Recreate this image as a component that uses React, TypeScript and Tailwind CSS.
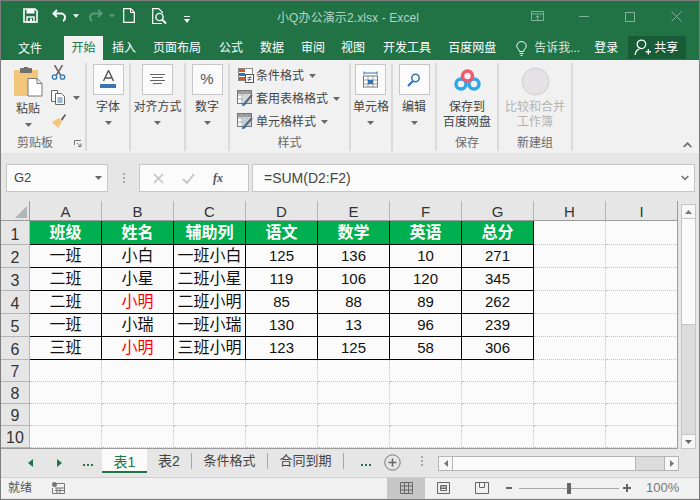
import type { ReactNode } from "react";

const FONT = { fontFamily: '"Liberation Sans", "Noto Sans CJK SC", sans-serif' };

const COLS = ["A", "B", "C", "D", "E", "F", "G", "H", "I"];
const HEAD = ["班级", "姓名", "辅助列", "语文", "数学", "英语", "总分"];
const ROWS = [
  ["一班", "小白", "一班小白", "125", "136", "10", "271"],
  ["二班", "小星", "二班小星", "119", "106", "120", "345"],
  ["二班", "小明", "二班小明", "85", "88", "89", "262"],
  ["一班", "小瑞", "一班小瑞", "130", "13", "96", "239"],
  ["三班", "小明", "三班小明", "123", "125", "58", "306"],
];
const RED = new Set([2, 4]);

function Caret({ className = "" }: { className?: string }) {
  return (
    <svg width="7" height="4" viewBox="0 0 7 4" className={className}>
      <path d="M0 0h7L3.5 4z" fill="#6a6a6a" />
    </svg>
  );
}

function Group({
  width,
  title,
  children,
}: {
  width: string;
  title: ReactNode;
  children: ReactNode;
}) {
  return (
    <div className={`${width} flex h-[88px] flex-col border-r-2 border-[#dadada]`}>
      <div className="h-[72px]">{children}</div>
      <div className="flex h-[16px] items-center justify-center text-xs text-[#6a6a6a]">
        {title}
      </div>
    </div>
  );
}

function BigButton({ label, children }: { label: string; children: ReactNode }) {
  return (
    <div className="flex flex-col items-center pt-[1px]">
      <div className="flex h-[31px] w-[31px] items-center justify-center border border-[#c6c6c6] bg-[#fbfbfb]">
        {children}
      </div>
      <div className="mt-[3px] whitespace-nowrap text-xs leading-[18px] text-[#444]">{label}</div>
      <Caret className="mt-[5px]" />
    </div>
  );
}

function StyleRow({ label, icon }: { label: string; icon: ReactNode }) {
  return (
    <div className="flex h-[23px] items-center">
      <div className="flex w-[17px] justify-center">{icon}</div>
      <span className="ml-[2px] whitespace-nowrap text-xs text-[#444]">{label}</span>
      <Caret className="ml-[5px]" />
    </div>
  );
}

function TableIcon({ tint }: { tint: string }) {
  return (
    <svg width="17" height="17" viewBox="0 0 17 17">
      <rect x="0.5" y="0.5" width="14" height="13" fill="#fff" stroke="#777" />
      <rect x="1" y="1" width="13" height="3" fill="#9a9a9a" />
      <path d="M5 1v12M10 1v12M1 5h13M1 9h13" stroke="#a9a9a9" />
      <rect x="6" y="5" width="8" height="8" fill={tint} />
      <path d="M15 5l-7 8" stroke="#666" strokeWidth="2" />
      <path d="M5 16c0-3 2-4 4-4 1 2-1 4-4 4z" fill="#2f75b5" />
    </svg>
  );
}

function Cell({ children, className }: { children?: ReactNode; className: string }) {
  return <div className={`flex items-center justify-center ${className}`}>{children}</div>;
}

export default function App() {
  return (
    <div
      className="flex h-[500px] w-[700px] flex-col overflow-hidden border border-[#7d7d7d] bg-[#e6e6e6]"
      style={FONT}
    >
      {/* title bar */}
      <div className="h-[35px] bg-[#217346] flex items-center text-white">
        <svg width="15" height="15" viewBox="0 0 15 15" className="ml-[22px] mb-[6px]">
          <path d="M1 1h11l2 2v11H1z" fill="none" stroke="#fff" strokeWidth="1.6" />
          <rect x="3.5" y="1" width="8" height="4.5" fill="#fff" />
          <rect x="4" y="9" width="7" height="5" fill="none" stroke="#fff" strokeWidth="1.4" />
          <rect x="7" y="10.5" width="2" height="3" fill="#fff" />
        </svg>
        <svg width="15" height="13" viewBox="0 0 15 13" className="ml-[14px] mb-[6px]">
          <path d="M5 1L1.5 4.5 5 8M2 4.5h7a4 4 0 0 1 4 4c0 2-1 3-2 3.5" fill="none" stroke="#fff" strokeWidth="2" />
        </svg>
        <svg width="6" height="4" viewBox="0 0 7 4" className="ml-[6px] mb-[6px]">
          <path d="M0 0h7L3.5 4z" fill="#fff" />
        </svg>
        <svg width="15" height="13" viewBox="0 0 15 13" className="ml-[9px] mb-[6px]">
          <path d="M10 1l3.5 3.500L10 8M13 4.500H6a4 4 0 0 0-4 4c0 2 1 3 2 3.500" fill="none" stroke="#5d9a79" strokeWidth="2" />
        </svg>
        <svg width="6" height="4" viewBox="0 0 7 4" className="ml-[6px] mb-[6px]">
          <path d="M0 0h7L3.5 4z" fill="#5d9a79" />
        </svg>
        <svg width="12" height="15" viewBox="0 0 12 15" className="ml-[8px] mb-[6px]">
          <path d="M.7.7h7l3.6 3.6v10H.7z" fill="none" stroke="#fff" strokeWidth="1.2" />
          <path d="M7.5 1v3.5H11" fill="none" stroke="#fff" />
        </svg>
        <svg width="16" height="17" viewBox="0 0 16 17" className="ml-[17px] mb-[5px]">
          <path d="M10 15.5H.7V.7h6l3.6 3.6v1" fill="none" stroke="#fff" strokeWidth="1.2" />
          <circle cx="7.5" cy="9" r="3.6" fill="none" stroke="#fff" strokeWidth="1.4" />
          <path d="M10 11.5l4 4" stroke="#fff" strokeWidth="2" />
        </svg>
        <svg width="6" height="7" viewBox="0 0 6 7" className="ml-[16px] mt-px">
          <path d="M0 0h6v1H0zM0 3h6L3 7z" fill="#fff" />
        </svg>
        <div className="ml-[87px] mb-[2px] w-[154px] whitespace-nowrap text-xs tracking-[0.1px] text-[#b5d3c2]">小Q办公演示2.xlsx - Excel</div>
        <svg width="14" height="11" viewBox="0 0 14 11" className="ml-[100px] mb-[4px]">
          <path d="M.5.5h12v9H.5zM.5 3h12M6.500 9V5M4.500 6.500l2-2 2 2" fill="none" stroke="#82b199" />
        </svg>
        <div className="ml-[34px] mb-[4px] h-px w-[10px] bg-[#82b199]" />
        <div className="ml-[36px] mb-[4px] h-[10px] w-[10px] border border-[#82b199]" />
        <svg width="11" height="11" viewBox="0 0 11 11" className="ml-[36px] mb-[4px]">
          <path d="M.5.5l10 10M10.500.5l-10 10" stroke="#82b199" />
        </svg>
      </div>

      {/* ribbon tabs */}
      <div className="flex h-[24px] bg-[#217346] text-xs text-white">
        <div className="ml-[17px] mt-px leading-[24px]">文件</div>
        <div className="ml-[22px] h-[24px] w-[39px] bg-[#f1f1f1] text-center leading-[24px] text-[#217346]">开始</div>
        <div className="ml-[9px] leading-[24px]">插入</div>
        <div className="ml-[17px] leading-[24px]">页面布局</div>
        <div className="ml-[18px] leading-[24px]">公式</div>
        <div className="ml-[17px] leading-[24px]">数据</div>
        <div className="ml-[17px] leading-[24px]">审阅</div>
        <div className="ml-[16px] leading-[24px]">视图</div>
        <div className="ml-[18px] leading-[24px]">开发工具</div>
        <div className="ml-[17px] leading-[24px]">百度网盘</div>
        <svg width="11" height="15" viewBox="0 0 11 15" className="ml-[20px] mt-[5px]">
          <path d="M3.500 10.500C3 8 .8 7.500.8 4.800a4.700 4.200 0 0 1 9.400 0c0 2.700-2.200 3.200-2.700 5.700zM3.500 12.500h4M4.500 14.500h2" fill="none" stroke="#fff" />
        </svg>
        <div className="ml-[7px] leading-[24px] text-[#dbe9e1]">告诉我...</div>
        <div className="ml-[14px] leading-[24px]">登录</div>
        <div className="ml-[10px] flex h-[23px] w-[58px] items-center bg-[#185c37]">
          <svg width="17" height="17" viewBox="0 0 16 16" className="ml-[6px]">
            <circle cx="7" cy="5" r="4" fill="none" stroke="#fff" strokeWidth="1.200" />
            <path d="M1 15c.5-3 2-5 4-5.500M11 12h5M13.500 9.500v5" fill="none" stroke="#fff" strokeWidth="1.200" />
          </svg>
          <span className="ml-[3px]">共享</span>
        </div>
      </div>

      {/* ribbon */}
      <div className="flex h-[93px] bg-[#f1f1f1]">
        <div className="flex items-start pt-[3px]">
          <Group
            width="w-[86px]"
            title={
              <div className="flex w-full items-center">
                <span className="ml-[16px]">剪贴板</span>
                <svg width="8" height="7" viewBox="0 0 8 7" className="ml-[21px]">
                  <path d="M.5 5V.5H7M3 3l4 3.500M7 3.500v3H4" fill="none" stroke="#777" />
                </svg>
              </div>
            }
          >
            <div className="flex pt-[4px]">
              <div className="ml-[11px] flex w-[32px] flex-col items-center">
                <svg width="30" height="31" viewBox="0 0 30 31">
                  <rect x="1" y="3" width="24" height="26" fill="#f2c77c" />
                  <rect x="7" y="1" width="12" height="5" rx="1" fill="#6f6f6f" />
                  <rect x="11" y="0" width="4" height="3" fill="#6f6f6f" />
                  <path d="M15 11.500h9l5 5V29H15z" fill="#fff" stroke="#777" />
                  <path d="M24 11.500v5h5" fill="none" stroke="#777" />
                </svg>
                <div className="mt-[3px] whitespace-nowrap text-xs leading-[16px] text-[#444]">粘贴</div>
                <Caret className="mt-[6px]" />
              </div>
              <div className="ml-[7px] flex flex-col">
                <svg width="15" height="15" viewBox="0 0 15 15" className="mt-[-2px]">
                  <path d="M3.500 0l6 10M11.500 0l-6 10" stroke="#666" strokeWidth="1.500" />
                  <circle cx="3.500" cy="12" r="2.200" fill="none" stroke="#2f75b5" strokeWidth="1.300" />
                  <circle cx="11.500" cy="12" r="2.200" fill="none" stroke="#2f75b5" strokeWidth="1.300" />
                </svg>
                <div className="mt-[10px] flex items-center">
                  <svg width="15" height="15" viewBox="0 0 15 15">
                    <path d="M.5.5h6v11h-6z" fill="#fff" stroke="#666" />
                    <path d="M4.500 3.500h6l3 3v8h-9z" fill="#fff" stroke="#666" />
                    <path d="M6.500 8h5M6.500 10h5M6.500 12h5" stroke="#2f75b5" />
                  </svg>
                  <Caret className="ml-[7px]" />
                </div>
                <svg width="16" height="15" viewBox="0 0 16 15" className="mt-[8px]">
                  <path d="M10 6l4-5 1 1-4 6z" fill="#555" />
                  <path d="M1 9l7-4 3 4-4 6z" fill="#f2c77c" />
                </svg>
              </div>
            </div>
          </Group>
          <Group width="w-[44px]" title="">
            <div className="flex justify-center">
              <BigButton label="字体">
                <svg width="17" height="20" viewBox="0 0 17 20">
                  <path d="M3.500 11L8.500 0.500 13.500 11M5 8h7" fill="none" stroke="#555" strokeWidth="1.400" />
                  <rect x="0" y="14" width="16" height="4" fill="#3c74b4" />
                </svg>
              </BigButton>
            </div>
          </Group>
          <Group width="w-[55px]" title="">
            <div className="flex justify-center">
              <BigButton label="对齐方式">
                <svg width="15" height="11" viewBox="0 0 15 11">
                  <path d="M0 .5h15M2 3.500h11M0 6.500h15M3 9.500h9" stroke="#666" />
                </svg>
              </BigButton>
            </div>
          </Group>
          <Group width="w-[44px]" title="">
            <div className="flex justify-center">
              <BigButton label="数字">
                <span className="text-[15px] text-[#555]">%</span>
              </BigButton>
            </div>
          </Group>
          <Group width="w-[121px]" title="样式">
            <div className="pl-[7px] pt-px">
              <StyleRow
                label="条件格式"
                icon={
                  <svg width="16" height="15" viewBox="0 0 16 15">
                    <rect x="0.500" y="0.500" width="14" height="12" fill="#fff" stroke="#888" />
                    <rect x="1" y="1" width="6" height="3" fill="#d9542b" />
                    <rect x="1" y="5" width="6" height="3" fill="#2f75b5" />
                    <rect x="1" y="9" width="6" height="3" fill="#d9542b" />
                    <rect x="7.500" y="6.500" width="8" height="8" fill="#fff" stroke="#555" />
                    <path d="M9.500 9.500h4M9.500 11.500h4M12.500 8l-2 5" stroke="#555" strokeWidth="0.800" />
                  </svg>
                }
              />
              <StyleRow label="套用表格格式" icon={<TableIcon tint="#cfd8e4" />} />
              <StyleRow label="单元格样式" icon={<TableIcon tint="#bcd0e8" />} />
            </div>
          </Group>
          <Group width="w-[42px]" title="">
            <div className="flex justify-center">
              <BigButton label="单元格">
                <svg width="15" height="17" viewBox="0 0 15 17">
                  <path d="M1 .5v3M14 .5v3M1 2h13" stroke="#2f75b5" />
                  <rect x="0.500" y="5" width="14" height="11" fill="#fff" stroke="#777" />
                  <path d="M5 5v11M10 5v11M1 9h13M1 13h13" stroke="#999" />
                  <rect x="5" y="9" width="5" height="4" fill="#2f75b5" />
                </svg>
              </BigButton>
            </div>
          </Group>
          <Group width="w-[44px]" title="">
            <div className="flex justify-center">
              <BigButton label="编辑">
                <svg width="14" height="14" viewBox="0 0 14 14">
                  <circle cx="8.500" cy="5" r="3.700" fill="none" stroke="#2f75b5" strokeWidth="1.500" />
                  <path d="M6 8l-5 5" stroke="#2f75b5" strokeWidth="2" />
                </svg>
              </BigButton>
            </div>
          </Group>
          <Group width="w-[62px]" title="保存">
            <div className="flex flex-col items-center pt-[6px]">
              <svg width="27" height="23" viewBox="0 0 27 23">
                <circle cx="7" cy="15" r="5" fill="none" stroke="#2fa8e8" strokeWidth="3.500" />
                <circle cx="20" cy="15" r="5" fill="none" stroke="#2fa8e8" strokeWidth="3.500" />
                <circle cx="13.500" cy="7" r="5" fill="none" stroke="#f2586d" strokeWidth="3.500" />
              </svg>
              <div className="mt-[8px] text-center text-xs leading-[15px] text-[#444]">
                保存到
                <br />
                百度网盘
              </div>
            </div>
          </Group>
          <Group width="w-[74px]" title="新建组">
            <div className="flex flex-col items-center pt-[4px]">
              <svg width="29" height="29" viewBox="0 0 29 29">
                <circle cx="14.500" cy="14.500" r="13.500" fill="#e4e2e6" stroke="#cfcfcf" />
              </svg>
              <div className="mt-[4px] text-center text-xs leading-[15px] text-[#b4b4b4]">
                比较和合并
                <br />
                工作簿
              </div>
            </div>
          </Group>
        </div>
        <div className="flex flex-1 items-end justify-end pb-[5px] pr-[7px]">
          <svg width="9" height="6" viewBox="0 0 9 6">
            <path d="M.7 5l3.800-3.800L8.300 5" fill="none" stroke="#666" strokeWidth="1.600" />
          </svg>
        </div>
      </div>

      {/* formula bar */}
      <div className="flex h-[48px] items-start pt-[11px] text-[13px] text-[#444]">
        <div className="ml-[5px] flex h-[28px] w-[102px] items-center border border-[#c6c6c6] bg-[#fbfbfb] pl-[7px]">
          <span className="flex-1">G2</span>
          <Caret className="mr-[5px]" />
        </div>
        <div className="ml-[15px] mt-[9px] flex h-[10px] w-[2px] flex-col justify-between">
          <div className="h-[2px] bg-[#a8a8a8]" />
          <div className="h-[2px] bg-[#a8a8a8]" />
          <div className="h-[2px] bg-[#a8a8a8]" />
        </div>
        <div className="ml-[14px] flex h-[28px] w-[110px] items-center border border-[#c6c6c6] bg-[#fbfbfb]">
          <svg width="11" height="11" viewBox="0 0 11 11" className="ml-[13px]">
            <path d="M1 1l9 9M10 1l-9 9" stroke="#c3c3c3" strokeWidth="1.600" />
          </svg>
          <svg width="13" height="11" viewBox="0 0 13 11" className="ml-[18px]">
            <path d="M1 6l4 4 7-9" fill="none" stroke="#c3c3c3" strokeWidth="1.800" />
          </svg>
          <span className="ml-[18px] text-xs font-bold italic text-[#555]" style={{ fontFamily: '"Liberation Serif", serif' }}>
            fx
          </span>
        </div>
        <div className="ml-[3px] flex h-[28px] w-[443px] items-center border border-[#c6c6c6] bg-[#fbfbfb] pl-[11px]">
          <span className="flex-1 text-[14px]">=SUM(D2:F2)</span>
          <svg width="8" height="6" viewBox="0 0 8 6" className="mr-[5px]">
            <path d="M.7 1l3.300 3.300L7.300 1" fill="none" stroke="#777" strokeWidth="1.600" />
          </svg>
        </div>
      </div>

      {/* sheet + vertical scrollbar */}
      <div className="flex h-[248px]">
        <div className="grid h-[248px] w-[677px] grid-cols-[29px_repeat(9,72px)] grid-rows-[20px_24px_repeat(5,23px)_repeat(4,22px)] overflow-hidden border-r border-b border-[#9b9b9b] bg-[#fbfbfb] text-[15px] text-[#111]">
          <div className="flex items-end justify-end border-r border-b border-[#9b9b9b] bg-[#e6e6e6] p-[2px]">
            <svg width="12" height="12" viewBox="0 0 12 12">
              <path d="M12 0v12H0z" fill="#b4b4b4" />
            </svg>
          </div>
          {COLS.map((c) => (
            <Cell key={c} className="border-r border-b border-r-[#b5b5b5] border-b-[#9b9b9b] bg-[#e6e6e6] pt-[4px] text-[15px] text-[#333]">
              {c}
            </Cell>
          ))}

          <Cell className="border-r border-b border-[#b5b5b5] bg-[#e6e6e6] pt-[4px] text-[16px] text-[#333]">1</Cell>
          {HEAD.map((h) => (
            <Cell key={h} className="border-r border-b border-black bg-[#00b050] text-[16px] font-bold text-white">
              {h}
            </Cell>
          ))}
          <Cell className="border-r border-b border-dotted border-[#c4c4c4]" />
          <Cell className="border-r border-b border-dotted border-[#c4c4c4]" />

          {ROWS.map((row, r) => (
            <div key={r} className="contents">
              <Cell className="border-r border-b border-[#b5b5b5] bg-[#e6e6e6] pt-[3px] text-[16px] text-[#333]">{r + 2}</Cell>
              {row.map((v, c) => (
                <Cell
                  key={c}
                  className={`border-r border-b border-black ${c < 3 ? "text-[16px]" : "text-[15px]"} ${c === 1 && RED.has(r) ? "text-[#ff0000]" : ""}`}
                >
                  {v}
                </Cell>
              ))}
              <Cell className="border-r border-b border-dotted border-[#c4c4c4]" />
              <Cell className="border-r border-b border-dotted border-[#c4c4c4]" />
            </div>
          ))}

          {[7, 8, 9, 10].map((n) => (
            <div key={n} className="contents">
              <Cell className="border-r border-b border-[#b5b5b5] bg-[#e6e6e6] pt-[3px] text-[16px] text-[#333]">{n}</Cell>
              {COLS.map((c) => (
                <Cell key={c} className="border-r border-b border-dotted border-[#c4c4c4]" />
              ))}
            </div>
          ))}
        </div>

        <div className="ml-[3px] mt-[3px] flex h-[245px] w-[15px] flex-col border-x border-[#c6c6c6] bg-[#dcdcdc]">
          <div className="flex h-[15px] items-center justify-center border-y border-[#c6c6c6] bg-[#f7f7f7]">
            <svg width="7" height="4" viewBox="0 0 7 4">
              <path d="M0 4h7L3.500 0z" fill="#777" />
            </svg>
          </div>
          <div className="h-[106px] border-b border-[#c6c6c6] bg-[#fbfbfb]" />
          <div className="flex-1" />
          <div className="flex h-[15px] items-center justify-center border-y border-[#c6c6c6] bg-[#f7f7f7]">
            <Caret />
          </div>
        </div>
      </div>

      {/* sheet tabs */}
      <div className="flex h-[28px] text-[13px] text-[#444]">
        <svg width="5" height="8" viewBox="0 0 5 8" className="ml-[27px] mt-[10px]">
          <path d="M5 0v8L0 4z" fill="#217346" />
        </svg>
        <svg width="5" height="8" viewBox="0 0 5 8" className="ml-[24px] mt-[10px]">
          <path d="M0 0v8l5-4z" fill="#217346" />
        </svg>
        <div className="ml-[21px] mt-[15px] flex w-[10px] justify-between">
          <div className="h-[2px] w-[2px] bg-[#217346]" />
          <div className="h-[2px] w-[2px] bg-[#217346]" />
          <div className="h-[2px] w-[2px] bg-[#217346]" />
        </div>
        <div className="ml-[9px] h-[24px] w-[45px] border-b-2 border-[#217346] bg-[#fbfbfb] pt-[3px] text-center text-[14px] text-[#217346]">表1</div>
        <div className="mt-[4px] h-[16px] w-[45px] border-r border-[#a8a8a8] text-center text-[14px] leading-[16px]">表2</div>
        <div className="mt-[4px] h-[16px] w-[76px] border-r border-[#a8a8a8] text-center leading-[16px]">条件格式</div>
        <div className="mt-[4px] h-[16px] w-[76px] border-r border-[#a8a8a8] text-center leading-[16px]">合同到期</div>
        <div className="ml-[17px] mt-[15px] flex w-[10px] justify-between">
          <div className="h-[2px] w-[2px] bg-[#217346]" />
          <div className="h-[2px] w-[2px] bg-[#217346]" />
          <div className="h-[2px] w-[2px] bg-[#217346]" />
        </div>
        <svg width="17" height="17" viewBox="0 0 17 17" className="ml-[13px] mt-[5px]">
          <circle cx="8.500" cy="8.500" r="7.700" fill="none" stroke="#777" />
          <path d="M8.500 4.500v8M4.500 8.500h8" stroke="#666" strokeWidth="1.500" />
        </svg>
        <div className="ml-[20px] mt-[7px] flex h-[10px] w-[2px] flex-col justify-between">
          <div className="h-[2px] bg-[#a8a8a8]" />
          <div className="h-[2px] bg-[#a8a8a8]" />
          <div className="h-[2px] bg-[#a8a8a8]" />
        </div>
        <div className="ml-[15px] mt-[7px] flex h-[15px] w-[241px] border border-[#b5b5b5] bg-[#dcdcdc]">
          <div className="flex w-[14px] items-center justify-center border-r border-[#b5b5b5] bg-[#f7f7f7]">
            <svg width="4" height="7" viewBox="0 0 4 7">
              <path d="M4 0v7L0 3.500z" fill="#777" />
            </svg>
          </div>
          <div className="w-[183px] border-r border-[#b5b5b5] bg-[#fbfbfb]" />
          <div className="flex-1" />
          <div className="flex w-[14px] items-center justify-center border-l border-[#b5b5b5] bg-[#f7f7f7]">
            <svg width="4" height="7" viewBox="0 0 4 7">
              <path d="M0 0v7l4-3.500z" fill="#777" />
            </svg>
          </div>
        </div>
      </div>

      {/* status bar */}
      <div className="flex h-[21px] items-center border-t border-[#d0d0d0] bg-[#f1f1f1] text-xs text-[#555]">
        <span className="ml-[7px]">就绪</span>
        <svg width="13" height="12" viewBox="0 0 13 12" className="ml-[20px]">
          <circle cx="2.500" cy="2.500" r="2.500" fill="#777" />
          <path d="M5 1.500h7.500v10H.5V6M3 6h9M3 8.500h9M5 6v5M8 6v5" fill="none" stroke="#777" />
        </svg>
        <div className="ml-[322px] flex h-[21px] w-[38px] items-center justify-center bg-[#c6c6c6]">
          <svg width="13" height="12" viewBox="0 0 13 12">
            <path d="M.5.5h12v11H.5zM.5 4h12M.5 8h12M4.500.5v11M8.500.5v11" fill="none" stroke="#666" />
          </svg>
        </div>
        <svg width="13" height="12" viewBox="0 0 13 12" className="ml-[12px]">
          <path d="M.5.5h12v11H.5zM3.500 3.500h6v5h-6zM4 5h5M4 6.500h5" fill="none" stroke="#666" />
        </svg>
        <svg width="14" height="12" viewBox="0 0 14 12" className="ml-[25px]">
          <path d="M.5.5h13v11H.5zM4.500.5v5h5v-5" fill="none" stroke="#666" />
        </svg>
        <div className="ml-[17px] h-[2px] w-[6px] bg-[#666]" />
        <div className="ml-[7px] flex h-px w-[100px] items-center justify-center bg-[#a8a8a8]">
          <div className="h-[11px] w-[4px] bg-[#666]" />
        </div>
        <svg width="8" height="8" viewBox="0 0 8 8" className="ml-[4px]">
          <path d="M4 0v8M0 4h8" stroke="#666" strokeWidth="2" />
        </svg>
        <span className="ml-[15px] text-[13px] text-[#777]">100%</span>
      </div>
    </div>
  );
}
